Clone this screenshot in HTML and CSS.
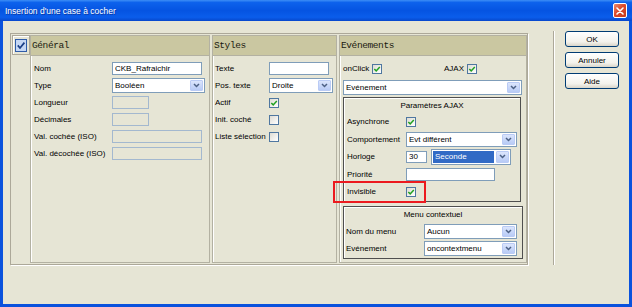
FILE: index.html
```html
<!DOCTYPE html>
<html>
  <head>
    <meta charset="UTF-8" />
    <title>Insertion d'une case à cocher</title>
    <link rel="stylesheet" href="styles.css">
  </head>
  <body>
    <div class="window">
      <div class="titlebar">
        <span class="title">Insertion d'une case à cocher</span>
        <span class="close">
          <svg width="8" height="8" viewBox="0 0 8 8">
            <path d="M1 1L7 7M7 1L1 7" stroke="#fff" stroke-width="1.6" stroke-linecap="round" />
          </svg>
        </span>
      </div>

      <div class="dialog">
        <div class="frame">
          <div class="col-check">
            <div class="check-head">
              <svg width="12" height="13" viewBox="0 0 12 13">
                <rect x="0.5" y="0.5" width="11" height="12" fill="#c6d8f4" stroke="#2f5ca8" />
                <path d="M2.8 6.4L5 9L9.4 3.6" fill="none" stroke="#1b3f86" stroke-width="1.7" />
              </svg>
            </div>
          </div>

          <!-- Général -->
          <div class="col col-general">
            <div class="col-head">Général</div>
            <div class="col-body">
              <div class="row">
                <span class="label">Nom</span>
                <input class="field w90" type="text" value="CKB_Rafraichir" />
              </div>
              <div class="row">
                <span class="label">Type</span>
                <div class="select w93">
                  <span class="sel-text">Booléen</span>
                  <span class="sel-btn"><svg width="7" height="5" viewBox="0 0 7 5"><path d="M1 1L3.5 3.5L6 1" fill="none" stroke="#4d6185" stroke-width="1.5" /></svg></span>
                </div>
              </div>
              <div class="row">
                <span class="label">Longueur</span>
                <input class="field disabled w37" type="text" disabled />
              </div>
              <div class="row">
                <span class="label">Décimales</span>
                <input class="field disabled w37" type="text" disabled />
              </div>
              <div class="row">
                <span class="label">Val. cochée (ISO)</span>
                <input class="field disabled w90" type="text" disabled />
              </div>
              <div class="row">
                <span class="label">Val. décochée (ISO)</span>
                <input class="field disabled w90" type="text" disabled />
              </div>
            </div>
          </div>

          <!-- Styles -->
          <div class="col col-styles">
            <div class="col-head">Styles</div>
            <div class="col-body">
              <div class="row">
                <span class="label">Texte</span>
                <input class="field w60" type="text" />
              </div>
              <div class="row">
                <span class="label">Pos. texte</span>
                <div class="select w64">
                  <span class="sel-text">Droite</span>
                  <span class="sel-btn"><svg width="7" height="5" viewBox="0 0 7 5"><path d="M1 1L3.5 3.5L6 1" fill="none" stroke="#4d6185" stroke-width="1.5" /></svg></span>
                </div>
              </div>
              <div class="row">
                <span class="label">Actif</span>
                <span class="cb"><svg width="8" height="8" viewBox="0 0 8 8"><path d="M1.3 4L3.2 5.9L6.8 2" fill="none" stroke="#21a121" stroke-width="1.5" /></svg></span>
              </div>
              <div class="row">
                <span class="label">Init. coché</span>
                <span class="cb"></span>
              </div>
              <div class="row">
                <span class="label">Liste sélection</span>
                <span class="cb"></span>
              </div>
            </div>
          </div>

          <!-- Evénements -->
          <div class="col col-events">
            <div class="col-head">Evénements</div>
            <div class="col-body">
              <div class="ev-top">
                <div class="ev-flag">
                  onClick
                  <span class="cb"><svg width="8" height="8" viewBox="0 0 8 8"><path d="M1.3 4L3.2 5.9L6.8 2" fill="none" stroke="#21a121" stroke-width="1.5" /></svg></span>
                </div>
                <div class="ev-flag">
                  AJAX
                  <span class="cb"><svg width="8" height="8" viewBox="0 0 8 8"><path d="M1.3 4L3.2 5.9L6.8 2" fill="none" stroke="#21a121" stroke-width="1.5" /></svg></span>
                </div>
              </div>

              <div class="select w179 ev-select">
                <span class="sel-text">Evénement</span>
                <span class="sel-btn"><svg width="7" height="5" viewBox="0 0 7 5"><path d="M1 1L3.5 3.5L6 1" fill="none" stroke="#4d6185" stroke-width="1.5" /></svg></span>
              </div>

              <div class="group group-ajax">
                <div class="group-title">Paramètres AJAX</div>
                <div class="grow">
                  <span class="glabel">Asynchrone</span>
                  <span class="cb"><svg width="8" height="8" viewBox="0 0 8 8"><path d="M1.3 4L3.2 5.9L6.8 2" fill="none" stroke="#21a121" stroke-width="1.5" /></svg></span>
                </div>
                <div class="grow">
                  <span class="glabel">Comportement</span>
                  <div class="select w111">
                    <span class="sel-text">Evt différent</span>
                    <span class="sel-btn"><svg width="7" height="5" viewBox="0 0 7 5"><path d="M1 1L3.5 3.5L6 1" fill="none" stroke="#4d6185" stroke-width="1.5" /></svg></span>
                  </div>
                </div>
                <div class="grow">
                  <span class="glabel">Horloge</span>
                  <input class="field num" type="text" value="30" />
                  <div class="select w80 tall">
                    <span class="sel-text picked">Seconde</span>
                    <span class="sel-btn"><svg width="7" height="5" viewBox="0 0 7 5"><path d="M1 1L3.5 3.5L6 1" fill="none" stroke="#4d6185" stroke-width="1.5" /></svg></span>
                  </div>
                </div>
                <div class="grow">
                  <span class="glabel">Priorité</span>
                  <input class="field w89" type="text" />
                </div>
                <div class="grow marked">
                  <span class="glabel">Invisible</span>
                  <span class="cb"><svg width="8" height="8" viewBox="0 0 8 8"><path d="M1.3 4L3.2 5.9L6.8 2" fill="none" stroke="#21a121" stroke-width="1.5" /></svg></span>
                  <span class="highlight"></span>
                </div>
              </div>

              <div class="group group-menu">
                <div class="group-title">Menu contextuel</div>
                <div class="grow">
                  <span class="glabel wide">Nom du menu</span>
                  <div class="select w93">
                    <span class="sel-text">Aucun</span>
                    <span class="sel-btn"><svg width="7" height="5" viewBox="0 0 7 5"><path d="M1 1L3.5 3.5L6 1" fill="none" stroke="#4d6185" stroke-width="1.5" /></svg></span>
                  </div>
                </div>
                <div class="grow">
                  <span class="glabel wide">Evénement</span>
                  <div class="select w93">
                    <span class="sel-text">oncontextmenu</span>
                    <span class="sel-btn"><svg width="7" height="5" viewBox="0 0 7 5"><path d="M1 1L3.5 3.5L6 1" fill="none" stroke="#4d6185" stroke-width="1.5" /></svg></span>
                  </div>
                </div>
              </div>
            </div>
          </div>
        </div>

        <div class="sep"></div>

        <div class="buttons">
          <button class="button">OK</button>
          <button class="button">Annuler</button>
          <button class="button">Aide</button>
        </div>
      </div>
    </div>
  </body>
</html>
```

FILE: styles.css
```css
:root {
  --dialog-bg: #e6e5d5;
  --band-bg: #cac7a1;
  --line: #aca899;
  --input-border: #7f9db9;
  --disabled-border: #a3b8cf;
  --xp-blue: #0a52dd;
  --cb-border: #4f77a0;
}

* {
  margin: 0;
  padding: 0;
  box-sizing: border-box;
}

body {
  width: 632px;
  height: 307px;
  overflow: hidden;
  font-family: "Liberation Sans", Arial, sans-serif;
  font-size: 8px;
  color: #000;
  background-color: var(--dialog-bg);
}

.window {
  height: 307px;
  display: flex;
  flex-direction: column;
}

/* Title bar */
.titlebar {
  height: 21px;
  flex-shrink: 0;
  display: flex;
  align-items: center;
  padding: 0 5px;
  color: #fff;
  background: linear-gradient(#3d8ef6 0, #0d62ec 12%, #0554e2 50%, #0a5deb 82%, #0747cc 100%);
}

.title {
  font-size: 8.5px;
  text-shadow: 1px 1px 0 #0b3aa6;
}

.close {
  margin-left: auto;
  width: 14px;
  height: 15px;
  display: flex;
  align-items: center;
  justify-content: center;
  border: 1px solid #fff;
  border-radius: 2px;
  background: linear-gradient(135deg, #e98a6e 0, #dc4a2b 45%, #c43c1c 100%);
}

/* Dialog body */
.dialog {
  flex: 1;
  display: flex;
  align-items: flex-start;
  padding: 10px 0 0 7px;
  border: 3px solid var(--xp-blue);
  border-top: 0;
  background-color: var(--dialog-bg);
}

.frame {
  width: 518px;
  height: 232px;
  margin-top: 2px;
  display: flex;
  padding: 1px 0 1px 1px;
  border: 1px solid var(--line);
  box-shadow: 1px 1px 0 #fff;
}

.col-check {
  width: 18px;
  flex-shrink: 0;
}

.check-head {
  height: 20px;
  display: flex;
  align-items: center;
  justify-content: center;
  border: 1px solid var(--line);
  box-shadow: inset 1px 1px 0 #fff;
}

.col {
  display: flex;
  flex-direction: column;
  flex-shrink: 0;
  border: 1px solid #b3b1a2;
  box-shadow: inset 1px 1px 0 #fff;
}

.col-general {
  width: 180px;
}

.col-styles {
  width: 125px;
  margin-left: 2px;
}

.col-events {
  width: 188px;
  margin-left: 2px;
}

.col-head {
  height: 20px;
  padding-left: 1px;
  display: flex;
  align-items: center;
  font-family: "Liberation Mono", "DejaVu Sans Mono", monospace;
  font-size: 9.5px;
  letter-spacing: -0.4px;
  color: #1a1a10;
  background-color: var(--band-bg);
  border-bottom: 1px solid #b3b1a2;
}

.col-body {
  padding: 4px 3px 0;
}

.col-styles .col-body {
  padding: 4px 2px 0;
}

.row {
  height: 17px;
  display: flex;
  align-items: center;
}

.label {
  width: 78px;
  flex-shrink: 0;
}

.col-styles .label {
  width: 54px;
}

/* Controls */
.field {
  height: 13px;
  padding: 0 2px;
  font-family: inherit;
  font-size: 8px;
  color: #000;
  border: 1px solid var(--input-border);
  background-color: #fff;
  outline: none;
}

.field.disabled {
  border-color: var(--disabled-border);
  background-color: var(--dialog-bg);
}

.w37 { width: 37px; }
.w60 { width: 60px; }
.w64 { width: 64px; }
.w80 { width: 80px; }
.w89 { width: 89px; }
.w90 { width: 90px; }
.w93 { width: 93px; }
.w111 { width: 111px; }
.w179 { width: 179px; }

.select {
  height: 15px;
  display: flex;
  border: 1px solid var(--input-border);
  background-color: #fff;
}

.select.tall {
  height: 16px;
}

.sel-text {
  flex: 1;
  padding-left: 2px;
  display: flex;
  align-items: center;
  white-space: nowrap;
  overflow: hidden;
}

.sel-text.picked {
  margin: 1px;
  color: #fff;
  background-color: #316ac5;
}

.sel-btn {
  width: 13px;
  margin: 1px;
  display: flex;
  align-items: center;
  justify-content: center;
  border: 1px solid #bacbf5;
  border-radius: 1px;
  background: linear-gradient(#dbe5fc, #b8cbf6);
}

.cb {
  width: 10px;
  height: 10px;
  flex-shrink: 0;
  display: inline-flex;
  align-items: center;
  justify-content: center;
  border: 1px solid var(--cb-border);
  background: linear-gradient(135deg, #dedcd4, #fff);
}

/* Evénements */
.col-events .col-body {
  padding: 5px 3px 0;
}

.ev-top {
  height: 15px;
  display: grid;
  grid-template-columns: 101px auto;
  align-items: center;
}

.ev-flag {
  display: flex;
  align-items: center;
  gap: 3px;
}

.ev-select {
  margin-top: 4px;
}

.group {
  border: 1px solid #4f4f4f;
  box-shadow: inset 1px 1px 0 #fff;
}

.group-ajax {
  width: 178px;
  height: 105px;
  margin-top: 2px;
}

.group-menu {
  width: 180px;
  height: 53px;
  margin-top: 4px;
}

.group-title {
  height: 15px;
  display: flex;
  align-items: center;
  justify-content: center;
}

.group-menu .group-title {
  height: 14px;
  margin-bottom: 2px;
}

.grow {
  height: 17.5px;
  padding-left: 3px;
  display: flex;
  align-items: center;
}

.group-menu .grow {
  height: 17px;
  padding-left: 2px;
}

.glabel {
  width: 59px;
  flex-shrink: 0;
}

.glabel.wide {
  width: 78px;
}

.field.num {
  width: 21px;
  height: 12px;
  margin-right: 4px;
}

/* red annotation around "Invisible" */
.marked {
  position: relative;
}

.highlight {
  position: absolute;
  left: -11px;
  top: -2px;
  width: 93px;
  height: 22px;
  border: 2px solid #ec1a1f;
}

/* Buttons */
.sep {
  width: 2px;
  height: 234px;
  margin-left: 25px;
  border-left: 1px solid var(--line);
  border-right: 1px solid #fff;
}

.buttons {
  display: flex;
  flex-direction: column;
  gap: 5px;
  margin-left: 10px;
}

.button {
  width: 54px;
  height: 16px;
  font-family: inherit;
  font-size: 8px;
  color: #000;
  border: 1px solid #003c74;
  border-radius: 3px;
  background: linear-gradient(#fff 0, #f3f2ec 70%, #d9d5c9 100%);
}
```
